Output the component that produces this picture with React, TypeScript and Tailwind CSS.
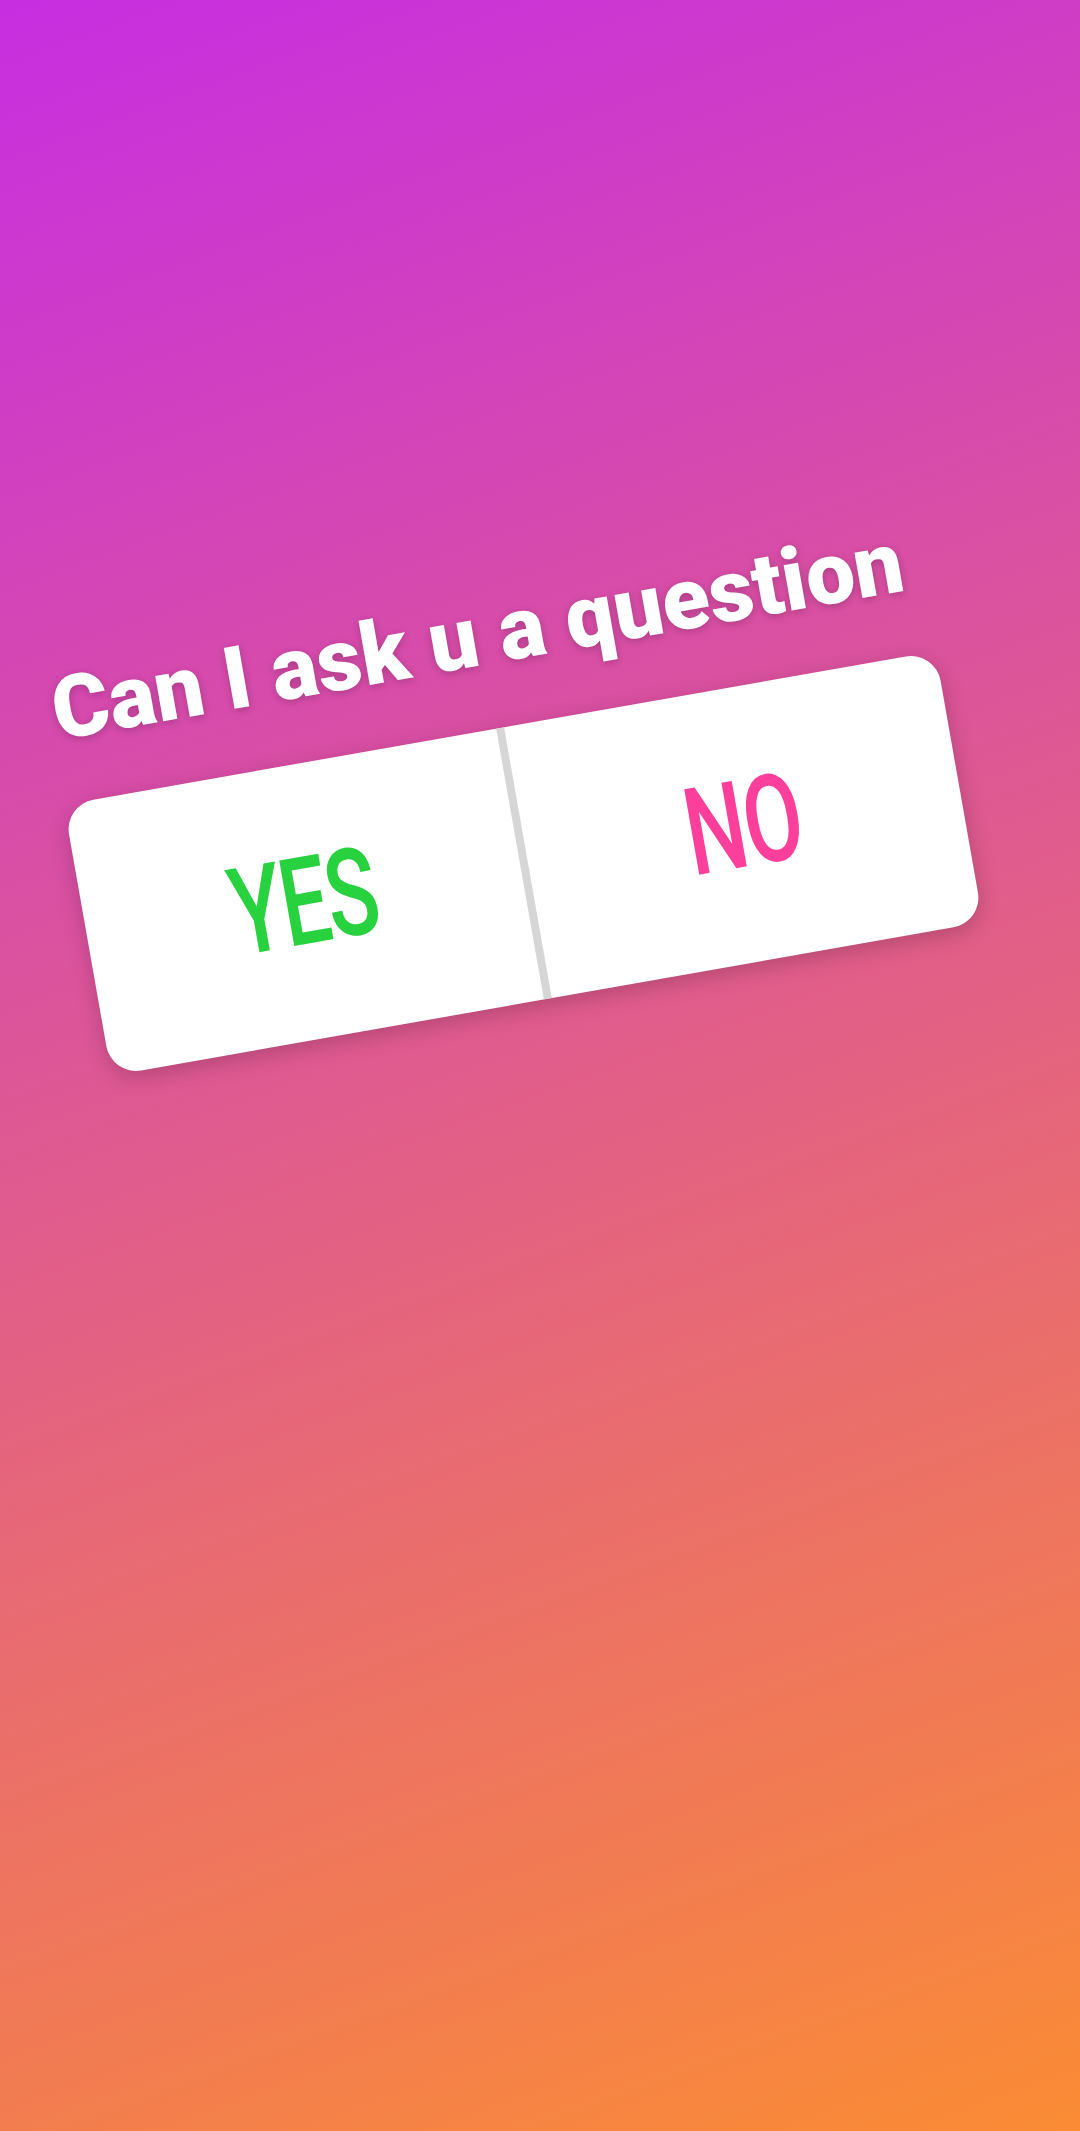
import React from 'react';

interface PollOptionProps {
  label: string;
  colorClass: string;
}

const PollOption: React.FC<PollOptionProps> = ({ label, colorClass }) => (
  <div className="flex flex-1 items-center justify-center">
    <span
      className={`inline-block scale-x-[0.7] text-[122px] font-medium leading-none tracking-tight ${colorClass}`}
    >
      {label}
    </span>
  </div>
);

export default function App() {
  return (
    <div className="min-h-[2131px] w-full overflow-hidden bg-[linear-gradient(160deg,#c72ee1_0%,#fb8c34_100%)] pt-[589px] font-['Roboto',sans-serif]">
      {/* Question sticker, tilted */}
      <div className="ml-[69px] flex w-[885px] -rotate-[10deg] flex-col items-center gap-[51px]">
        <h1 className="whitespace-nowrap pr-3 text-[87px] font-black leading-none text-white [text-shadow:0_2px_8px_rgba(0,0,0,0.22)]">
          Can I ask u a question
        </h1>

        {/* Poll card */}
        <div className="flex h-[275px] w-full overflow-hidden rounded-[30px] bg-white shadow-[0_6px_22px_rgba(0,0,0,0.2)]">
          <PollOption label="YES" colorClass="text-[#27d23e]" />
          <div className="w-2 shrink-0 bg-[#d6d6d6]" />
          <PollOption label="NO" colorClass="text-[#fd3f9c]" />
        </div>
      </div>
    </div>
  );
}
